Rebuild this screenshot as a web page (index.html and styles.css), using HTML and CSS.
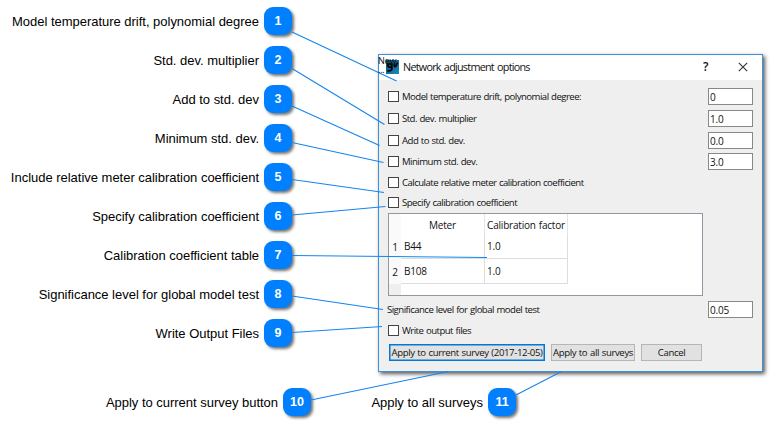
FILE: index.html
```html
<!DOCTYPE html>
<html lang="en">
<head>
<meta charset="utf-8">
<title>Network adjustment options</title>
<link rel="stylesheet" href="styles.css">
</head>
<body>
<main class="figure">
  <ol class="callouts">
    <li class="callout"><span class="label">Model temperature drift, polynomial degree</span><b class="badge">1</b></li>
    <li class="callout"><span class="label">Std. dev. multiplier</span><b class="badge">2</b></li>
    <li class="callout"><span class="label">Add to std. dev</span><b class="badge">3</b></li>
    <li class="callout"><span class="label">Minimum std. dev.</span><b class="badge">4</b></li>
    <li class="callout"><span class="label">Include relative meter calibration coefficient</span><b class="badge">5</b></li>
    <li class="callout"><span class="label">Specify calibration coefficient</span><b class="badge">6</b></li>
    <li class="callout"><span class="label">Calibration coefficient table</span><b class="badge">7</b></li>
    <li class="callout"><span class="label">Significance level for global model test</span><b class="badge">8</b></li>
    <li class="callout"><span class="label">Write Output Files</span><b class="badge">9</b></li>
  </ol>

  <section class="dialog">
    <header class="titlebar">
      <span class="corner">New<br>...</span>
      <svg class="app-icon" width="13" height="14" viewBox="0 0 13 14">
        <defs><linearGradient id="g" x2="1" y2="1"><stop offset="0" stop-color="#0d4868"/><stop offset="1" stop-color="#1a8cc4"/></linearGradient></defs>
        <rect width="13" height="14" fill="url(#g)"/>
        <path d="M5.500 6.800C1.500 8.500 .8 3.800 3.300 3.800S5.800 6 5.800 6M5.800 3.300V9Q5.500 11.300 1.500 10.800M8.300 3.500V5.500Q8.700 7.500 10 6L11.500 2.500" fill="none" stroke="#020609" stroke-width="1.8"/>
      </svg>
      <h1 class="title">Network adjustment options</h1>
      <span class="help">?</span>
      <svg class="close" width="10" height="10" viewBox="0 0 10 10"><path d="M.8.8 9.2 9.2M9.2.8.8 9.2" fill="none" stroke="#333" stroke-width="1.1"/></svg>
    </header>
    <div class="content">
      <div class="row"><i class="box"></i><span class="text">Model temperature drift, polynomial degree:</span><span class="field">0</span></div>
      <div class="row"><i class="box"></i><span class="text">Std. dev. multiplier</span><span class="field">1.0</span></div>
      <div class="row"><i class="box"></i><span class="text">Add to std. dev.</span><span class="field">0.0</span></div>
      <div class="row"><i class="box"></i><span class="text">Minimum std. dev.</span><span class="field">3.0</span></div>
      <div class="row short"><i class="box"></i><span class="text">Calculate relative meter calibration coefficient</span></div>
      <div class="row short"><i class="box"></i><span class="text">Specify calibration coefficient</span></div>
      <div class="table">
        <span class="num"></span><span class="th">Meter</span><span class="th">Calibration factor</span>
        <span class="num">1</span><span class="td">B44</span><span class="td">1.0</span>
        <span class="num">2</span><span class="td">B108</span><span class="td">1.0</span>
        <span class="num rest"></span>
      </div>
      <div class="row level"><span class="text">Significance level for global model test</span><span class="field">0.05</span></div>
      <div class="row write"><i class="box"></i><span class="text">Write output files</span></div>
      <div class="buttons">
        <span class="button primary">Apply to current survey (2017-12-05)</span>
        <span class="button all">Apply to all surveys</span>
        <span class="button cancel">Cancel</span>
      </div>
    </div>
  </section>

  <div class="bottom">
    <div class="callout first"><span class="label">Apply to current survey button</span><b class="badge">10</b></div>
    <div class="callout second"><span class="label">Apply to all surveys</span><b class="badge">11</b></div>
  </div>

  <svg class="leaders" width="772" height="427" viewBox="0 0 772 427">
    <path d="M292 32 396.500 81M292 68.500 384.500 124.500M292 106 379.500 145.500M292 142.500 383.500 162.500M292 179.500 384 192.500M292 215 385.500 206.500M292 255.500 487 257.500M292 296 383 309.500M292 332.500 382 326.500M311 400 448.500 371.500M516 395 561.500 371.500"/>
  </svg>
</main>
</body>
</html>
```

FILE: styles.css
```css
* { box-sizing: border-box; }
body { margin: 0; background: #fff; }
.figure {
  position: relative;
  width: 772px;
  height: 427px;
  overflow: hidden;
  display: grid;
  grid-template-columns: 292px 385px;
  grid-template-rows: 372px 55px;
  column-gap: 86px;
  font-family: "Liberation Sans", Arial, sans-serif;
}
.callouts { list-style: none; margin: 0; padding: 7px 0 0; display: flex; flex-direction: column; gap: 11px; }
.callout { display: flex; justify-content: flex-end; align-items: center; gap: 5px; height: 28px; }
.label { font-size: 13px; letter-spacing: -.02px; color: #000; white-space: nowrap; }
.badge {
  width: 28px; height: 28px; flex: none;
  border-radius: 9px;
  background: #0080ff; color: #fff;
  font-size: 12.5px; line-height: 28px; text-align: center;
  box-shadow: 2px 2px 3px rgba(0, 0, 0, .55);
}
.bottom { grid-column: 1 / -1; display: flex; padding-top: 16px; }
.first { width: 311px; }
.second { width: 205px; }
.leaders { position: absolute; left: 0; top: 0; pointer-events: none; }
.leaders path { fill: none; stroke: #1585ee; stroke-width: 1.1; }

.dialog {
  margin-top: 54px;
  height: 318px;
  border: 1px solid #3b92dc;
  background: #efefef;
  box-shadow: 2px 2px 4px rgba(0, 0, 0, .65);
  font-family: "Open Sans", "Noto Sans", sans-serif;
  font-size: 9.6px;
  letter-spacing: -.53px;
  word-spacing: .6px;
  color: #111;
}
.titlebar { position: relative; height: 25px; background: #fff; display: flex; align-items: center; padding: 0 14px 0 7px; }
.corner { position: absolute; z-index: 1; left: -1px; top: 1px; font-size: 9px; line-height: 9px; letter-spacing: -.2px; }
.app-icon { flex: none; margin-top: -1px; }
.title { margin: -2px auto 0 4px; font-size: 10.8px; letter-spacing: -.74px; word-spacing: 1px; font-weight: 400; white-space: nowrap; }
.help { font-size: 12px; font-weight: 600; margin: -2px 30px 0 0; }
.close { flex: none; margin-top: -1px; }
.content { padding: 6px 9px 0; }
.row { display: flex; align-items: center; height: 21.7px; }
.short { height: 19.5px; }
.box { width: 11px; height: 11px; border: 1px solid #444; background: #fff; margin-right: 3px; flex: none; }
.text { white-space: nowrap; }
.level .text { margin-left: -1px; }
.write .text { margin-top: 1px; }
.field {
  margin-left: auto; width: 45px; height: 17px; flex: none;
  border: 1px solid #888; background: #fff;
  padding-left: 1px; line-height: 17px; font-size: 10px; letter-spacing: -.2px;
}
.table {
  margin-top: 1px;
  width: 315px; height: 83px;
  border: 1px solid #9597a0; background: #fff;
  display: grid;
  grid-template-columns: 12px 84px 83px;
  grid-template-rows: 20px 25px 25px 11px;
  white-space: nowrap;
  font-size: 10px;
  letter-spacing: -.2px;
}
.num { text-align: center; line-height: 26px; background: #fafafa; }
.rest { background: #efefef; }
.th { text-align: center; line-height: 22px; border-right: 1px solid #e4e4e4; }
.td { padding-left: 3px; line-height: 24px; border-right: 1px solid #ddd; border-bottom: 1px solid #ddd; }
.td:nth-child(3n) { padding-left: 2px; }
.level { height: 28px; }
.write { height: 13px; }
.buttons { display: flex; gap: 6px; padding: 7px 0 0 1px; letter-spacing: -.38px; }
.button { height: 17px; border: 1px solid #b5b5b5; background: #e1e1e1; line-height: 15px; text-align: center; white-space: nowrap; }
.primary { width: 156px; border: 1px solid #0078d7; box-shadow: inset 0 0 0 .5px #0078d7; }
.all { width: 84px; }
.cancel { width: 61px; }
```
